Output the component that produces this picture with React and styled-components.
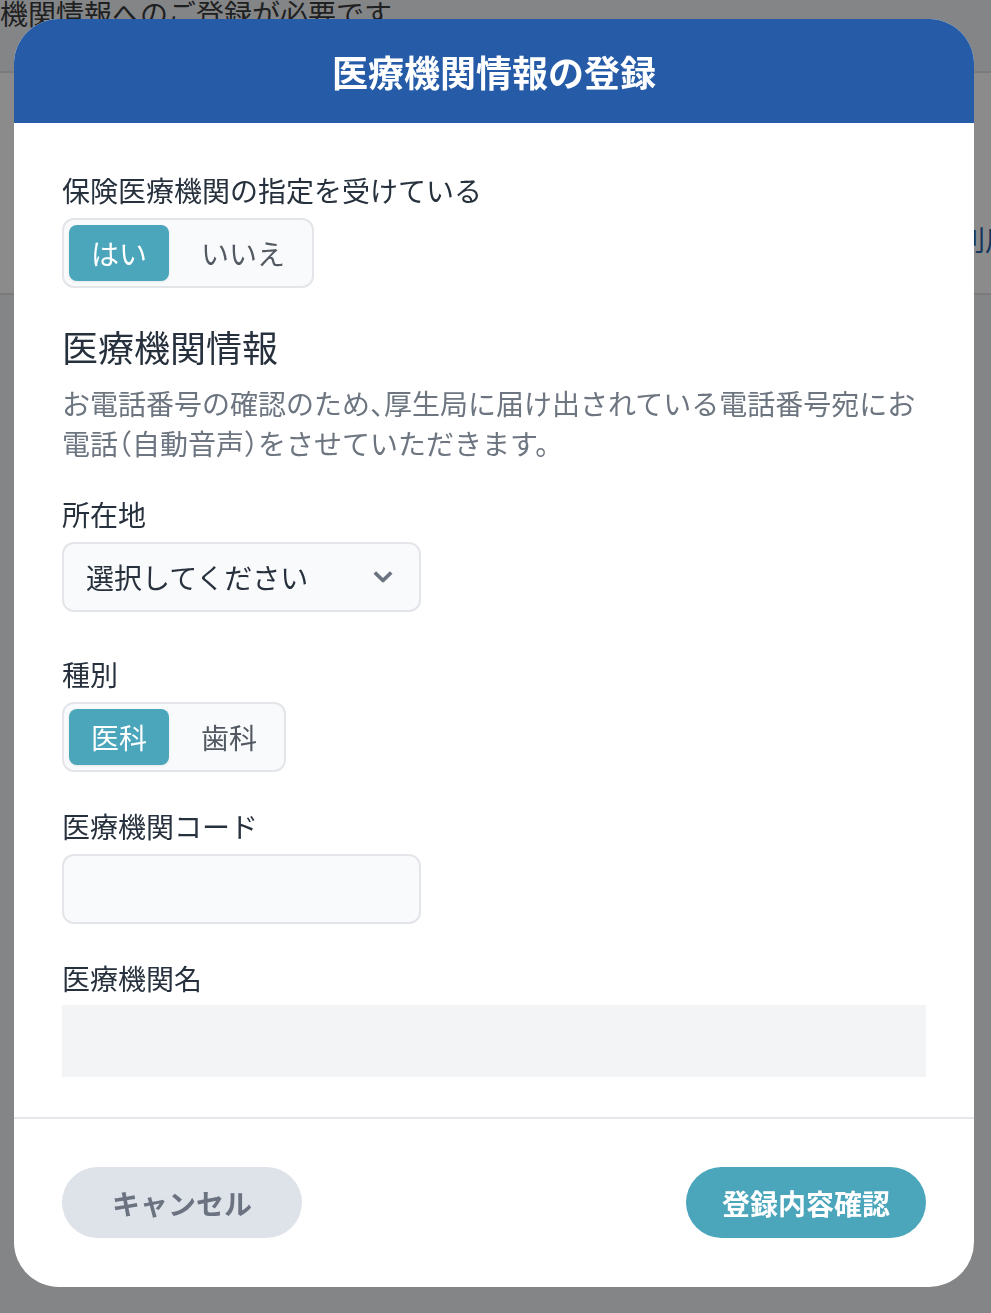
import React, { useState } from 'react';
import styled, { createGlobalStyle } from 'styled-components';

const GlobalStyle = createGlobalStyle`
  html, body {
    margin: 0;
    padding: 0;
    height: 100%;
    overflow: hidden;
  }
  body {
    font-family: "Noto Sans CJK JP", "Noto Sans", sans-serif;
    background: #f3f4f6;
  }
  * { box-sizing: border-box; }
`;

/* page behind the dialog */
const Page = styled.div`
  min-height: 100vh;
  background: #f3f4f6;
`;

const PageNotice = styled.div`
  font-size: 28px;
  line-height: 30px;
  color: #3a3b3d;
  white-space: nowrap;
  margin-top: -2px;
`;

const PageCard = styled.div`
  margin-top: 43px;
  height: 224px;
  background: #fff;
  border-top: 2px solid #e0e2e6;
  border-bottom: 2px solid #e0e2e6;
  padding: 146px 0 0 957px;
  font-size: 28px;
  line-height: 40px;
  color: #2563a7;
  white-space: nowrap;
  overflow: hidden;
`;

const Overlay = styled.div`
  position: fixed;
  inset: 0;
  background: rgba(0, 0, 0, 0.453);
  display: flex;
  align-items: flex-start;
  padding: 19px 17px 0 14px;
`;

const Modal = styled.div`
  width: 960px;
  background: #fff;
  border-radius: 45px;
  overflow: hidden;
  display: flex;
  flex-direction: column;
`;

const Header = styled.header`
  height: 104px;
  background: #255ba7;
  display: flex;
  align-items: center;
  justify-content: center;
`;

const Title = styled.h2`
  margin: 0;
  color: #fff;
  font-size: 36px;
  font-weight: 700;
  line-height: 1;
`;

const Body = styled.div`
  padding: 47px 48px 40px;
  display: flex;
  flex-direction: column;
  align-items: flex-start;
`;

const Label = styled.label`
  display: block;
  margin-top: ${p => p.$gap || 0}px;
  font-size: 28px;
  line-height: 40px;
  color: #27313d;
`;

const SectionTitle = styled.h3`
  margin: ${p => p.$gap}px 0 0;
  font-size: 36px;
  font-weight: 400;
  line-height: 54px;
  color: #27313d;
`;

const Description = styled.p`
  margin: 10px 0 0;
  font-size: 28px;
  line-height: 40px;
  font-feature-settings: "halt";
  color: #6c7580;
`;

const Segmented = styled.div`
  margin-top: 8px;
  display: flex;
  gap: 10px;
  padding: 5px;
  border: 2px solid #e3e5e9;
  border-radius: 12px;
  background: #f9fafb;
`;

const SegmentButton = styled.button`
  height: 56px;
  padding: 0 22px;
  border: none;
  border-radius: 8px;
  font-family: inherit;
  font-size: 28px;
  line-height: 1;
  cursor: pointer;
  background: ${p => (p.$active ? '#4ba6bc' : 'transparent')};
  color: ${p => (p.$active ? '#fff' : '#525962')};
  box-shadow: ${p => (p.$active ? '0 1px 3px rgba(0,0,0,0.08)' : 'none')};
`;

const SelectBox = styled.div`
  margin-top: 8px;
  width: 359px;
  height: 70px;
  border: 2px solid #e3e5e9;
  border-radius: 12px;
  background: #f9fafb;
  display: flex;
  align-items: center;
  justify-content: space-between;
  padding: 0 26px 0 22px;
  font-size: 28px;
  color: #27313d;
  cursor: pointer;
`;

const TextInput = styled.input`
  margin-top: 8px;
  width: 359px;
  height: 70px;
  border: 2px solid #e3e5e9;
  border-radius: 12px;
  background: #f9fafb;
  padding: 0 22px;
  font-family: inherit;
  font-size: 28px;
  color: #27313d;
  outline: none;
`;

const ReadonlyField = styled.div`
  margin-top: 7px;
  width: 100%;
  height: 72px;
  background: #f3f4f6;
`;

const Divider = styled.hr`
  margin: 0;
  border: none;
  height: 2px;
  background: #e5e7eb;
`;

const Footer = styled.footer`
  padding: 48px 48px 49px;
  display: flex;
  justify-content: space-between;
`;

const PillButton = styled.button`
  width: 240px;
  height: 71px;
  border: none;
  border-radius: 36px;
  font-family: inherit;
  font-size: 28px;
  font-weight: 700;
  cursor: pointer;
  background: ${p => (p.$primary ? '#4ba6bc' : '#dee2e9')};
  color: ${p => (p.$primary ? '#fff' : '#6b7280')};
`;

const Chevron = () => (
  <svg width="20" height="14" viewBox="0 0 20 14" fill="none">
    <polyline points="1.8,2.5 10,10.5 18.2,2.5" stroke="#6b7280" strokeWidth="3.8" strokeLinejoin="round" />
  </svg>
);

const Toggle = ({ options, value, onChange }) => (
  <Segmented>
    {options.map(opt => (
      <SegmentButton key={opt} $active={opt === value} onClick={() => onChange(opt)}>
        {opt}
      </SegmentButton>
    ))}
  </Segmented>
);

export default function App() {
  const [insured, setInsured] = useState('はい');
  const [kind, setKind] = useState('医科');

  return (
    <>
      <GlobalStyle />
      <Page>
        <PageNotice>機関情報へのご登録が必要です</PageNotice>
        <PageCard>利用ご案内</PageCard>
      </Page>
      <Overlay>
        <Modal>
          <Header>
            <Title>医療機関情報の登録</Title>
          </Header>
          <Body>
            <Label>保険医療機関の指定を受けている</Label>
            <Toggle options={['はい', 'いいえ']} value={insured} onChange={setInsured} />

            <SectionTitle $gap={31}>医療機関情報</SectionTitle>
            <Description>
              お電話番号の確認のため、厚生局に届け出されている電話番号宛にお電話（自動音声）をさせていただきます。
            </Description>

            <Label $gap={31}>所在地</Label>
            <SelectBox>
              <span>選択してください</span>
              <Chevron />
            </SelectBox>

            <Label $gap={42}>種別</Label>
            <Toggle options={['医科', '歯科']} value={kind} onChange={setKind} />

            <Label $gap={34}>医療機関コード</Label>
            <TextInput type="text" />

            <Label $gap={34}>医療機関名</Label>
            <ReadonlyField />
          </Body>
          <Divider />
          <Footer>
            <PillButton>キャンセル</PillButton>
            <PillButton $primary>登録内容確認</PillButton>
          </Footer>
        </Modal>
      </Overlay>
    </>
  );
}
